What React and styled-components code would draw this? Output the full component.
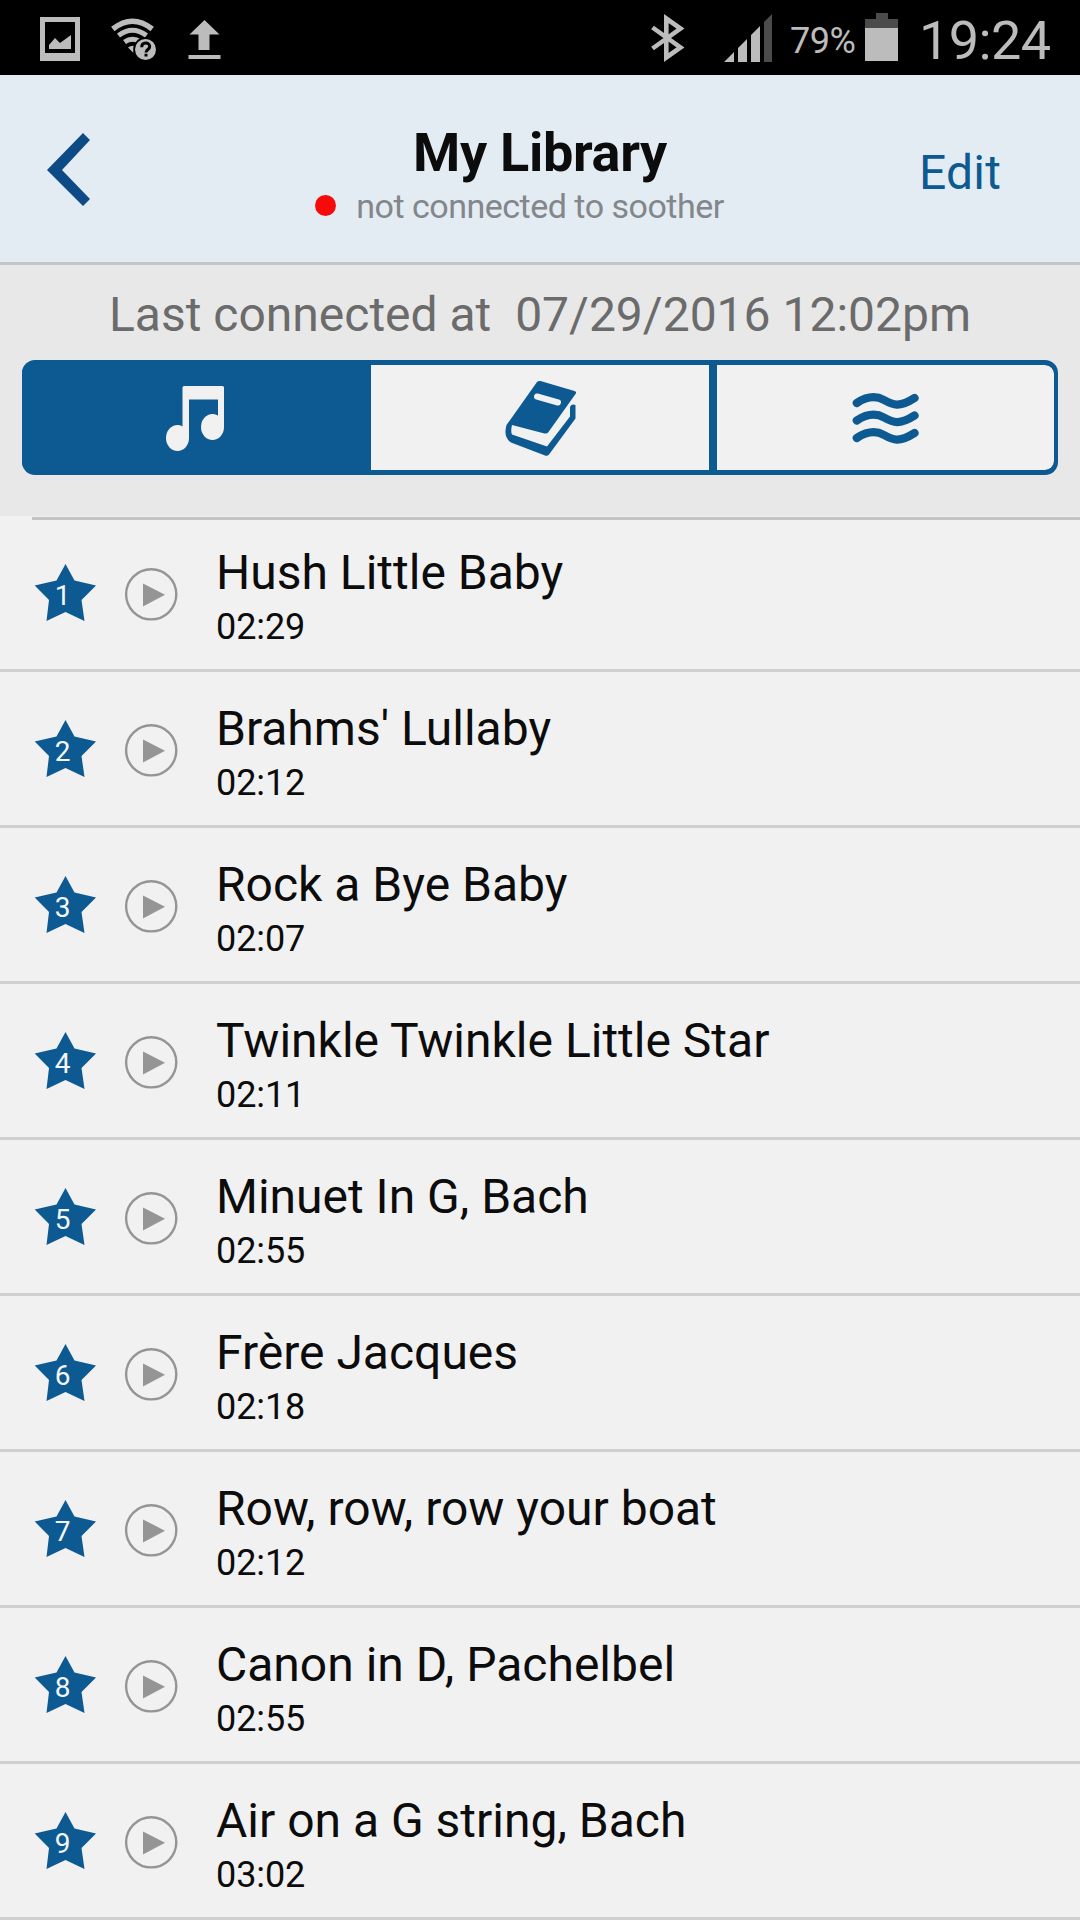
import styled, { createGlobalStyle } from 'styled-components'

const GlobalStyle = createGlobalStyle`
  :root {
    --primary-color: #0d5992;
    --background-color: #f1f1f1;
    --status-color: #bcbcbc;
  }

  * {
    box-sizing: border-box;
  }

  body {
    margin: 0;
    background-color: var(--background-color);
    font-family: Roboto, 'Liberation Sans', sans-serif;
    color: #0c0c0c;
  }

  h1, h2, p, ul {
    margin: 0;
    padding: 0;
    font-weight: 400;
  }

  button {
    padding: 0;
    border: none;
    background: none;
    font-family: inherit;
  }

  svg {
    display: block;
    flex-shrink: 0;
  }
`

const Screen = styled.main`
  width: 1080px;
  height: 1920px;
  overflow: hidden;
`

const StatusBar = styled.div`
  height: 75px;
  padding: 0 31px 0 40px;
  background-color: #000;
  color: var(--status-color);
  display: flex;
  justify-content: space-between;
`

const StatusGroup = styled.div`
  display: flex;
  gap: ${({ $gap }) => $gap || 0}px;
`

const BatteryText = styled.span`
  width: 92px;
  padding-left: 17px;
  font-size: 36px;
  line-height: 82px;
  letter-spacing: -0.5px;
  white-space: nowrap;
`

const Clock = styled.span`
  margin-left: 21px;
  width: 130px;
  font-size: 54px;
  line-height: 81px;
  letter-spacing: -0.6px;
  white-space: nowrap;
`

const Header = styled.header`
  height: 190px;
  background-color: #e4ecf3;
  border-bottom: 3px solid #c2c5c7;
  display: grid;
  grid-template-columns: 200px 1fr 200px;
`

const BackButton = styled.button`
  padding: 58px 0 0 47px;
  display: flex;
  align-items: flex-start;
`

const HeaderTitle = styled.div`
  padding-top: 46px;
  display: flex;
  flex-direction: column;
  align-items: center;
`

const Title = styled.h1`
  font-size: 54px;
  font-weight: 700;
  line-height: 64px;
  letter-spacing: -0.3px;
`

const Connection = styled.p`
  margin-top: 1px;
  display: flex;
  align-items: center;
  gap: 20px;
  font-size: 34px;
  line-height: 40px;
  letter-spacing: -0.5px;
  color: #83868a;
`

const Dot = styled.span`
  width: 21px;
  height: 21px;
  margin: -2px 0 0 -41px;
  border-radius: 50%;
  background-color: #f70a0a;
`

const EditButton = styled.button`
  padding: 70px 0 0 39px;
  font-size: 48px;
  line-height: 56px;
  text-align: left;
  letter-spacing: 0.2px;
  color: var(--primary-color);
  display: flex;
  align-items: flex-start;
`

const Panel = styled.section`
  height: 251px;
  padding: 22px 22px 0;
  background-color: #e8e8e8;
`

const LastConnected = styled.p`
  height: 73px;
  font-size: 48px;
  line-height: 56px;
  text-align: center;
  white-space: pre;
  color: #6b6b6b;
`

const Tabs = styled.div`
  height: 115px;
  border: solid var(--primary-color);
  border-width: 5px 4px 5px 0;
  border-radius: 13px;
  background-color: var(--primary-color);
  overflow: hidden;
  display: grid;
  grid-template-columns: 349px 346px 337px;
`

const Tab = styled.button`
  background-color: ${({ $active }) => ($active ? 'var(--primary-color)' : 'var(--background-color)')};
  color: ${({ $active }) => ($active ? 'var(--background-color)' : 'var(--primary-color)')};
  border-right: ${({ $divided }) => ($divided ? '8px solid var(--primary-color)' : 'none')};
  padding: ${({ $offset }) => $offset};
  display: flex;
  align-items: flex-start;

  &:last-child {
    border-radius: 0 9px 9px 0;
  }
`

const List = styled.ul`
  list-style: none;

  &::before {
    content: '';
    display: block;
    height: 3px;
    margin: 1px 0 -4px 32px;
    background-color: #c4c4c4;
  }
`

const Row = styled.li`
  height: 156px;
  padding-left: 34px;
  border-bottom: 3px solid #d0d0d0;
  display: flex;
`

const Favorite = styled.div`
  width: 62px;
  margin-top: 48px;
  display: grid;
  align-items: start;

  > * {
    grid-area: 1 / 1;
  }
`

const Rank = styled.span`
  padding: 16px 5px 0 0;
  font-size: 28px;
  line-height: 32px;
  text-align: center;
  color: #f4f7fa;
`

const PlayButton = styled.button`
  width: 54px;
  height: 54px;
  margin: 51px 0 0 28px;
`

const TrackInfo = styled.div`
  padding: 29px 0 0 38px;
`

const TrackName = styled.h2`
  font-size: 48px;
  line-height: 56px;
  white-space: nowrap;
`

const Duration = styled.p`
  margin-top: 5px;
  font-size: 36px;
  line-height: 42px;
  letter-spacing: -0.1px;
`

const tracks = [
  { name: 'Hush Little Baby', duration: '02:29' },
  { name: "Brahms' Lullaby", duration: '02:12' },
  { name: 'Rock a Bye Baby', duration: '02:07' },
  { name: 'Twinkle Twinkle Little Star', duration: '02:11' },
  { name: 'Minuet In G, Bach', duration: '02:55' },
  { name: 'Frère Jacques', duration: '02:18' },
  { name: 'Row, row, row your boat', duration: '02:12' },
  { name: 'Canon in D, Pachelbel', duration: '02:55' },
  { name: 'Air on a G string, Bach', duration: '03:02' }
]

// Status bar icons share one 75px tall strip, only x changes
const ImageIcon = () => (
  <svg width='40' height='75' viewBox='40 0 40 75' fill='currentColor'>
    <path fillRule='evenodd' d='M40 17h40v44H40zM45 22v31h30V22z' />
    <path d='M49 49v-4l6-7 5 5 11-8v14z' />
  </svg>
)

const WifiIcon = () => (
  <svg width='46' height='75' viewBox='110 0 46 75' fill='none' stroke='currentColor'>
    <path d='M111.8 29Q131.5 13.500 151.200 29' strokeWidth='5.500' />
    <path d='M117.500 35.5Q131.5 25 145.500 35.500' strokeWidth='5' />
    <path d='M123.500 42Q131.5 36.500 139.5 42' strokeWidth='5' />
    <path d='M127 47.500q4.5-3.500 9 0l-4 5z' fill='currentColor' stroke='none' />
    <circle cx='144.5' cy='49.5' r='12.3' fill='#000' stroke='none' />
    <circle cx='144.5' cy='49.5' r='10.5' fill='currentColor' stroke='none' />
    <path d='M140.7 47.300c0-5.5 8-5.5 8-.8 0 3-3.7 3-3.7 6M145 53.800v2.700' stroke='#000' strokeWidth='3' />
  </svg>
)

const UploadIcon = () => (
  <svg width='33' height='75' viewBox='187.500 0 33 75' fill='currentColor'>
    <path d='M204 20l15 14.5h-10V50h-11V34.5h-9zM188 55h32v4h-32z' />
  </svg>
)

const BluetoothIcon = () => (
  <svg width='34' height='75' viewBox='651 0 34 75' fill='none' stroke='currentColor' strokeWidth='4.6'>
    <path d='M652.5 27.5L680.5 47.5L666.3 57.5V18.5L680.5 28.5L652.5 48.5' />
  </svg>
)

const SignalIcon = () => (
  <svg width='49' height='75' viewBox='724 0 49 75' fill='currentColor'>
    <path d='M724 62l10-10v10zM738 62V48l9-9v23zM751 62V35l9-9v36z' />
    <path d='M764 62V22l8-8v48z' fill='#4b4b4b' />
  </svg>
)

const BatteryIcon = () => (
  <svg width='33' height='75' viewBox='865 0 33 75'>
    <path d='M865 19h11v-6h12v6h10v10h-33z' fill='#4b4b4b' />
    <path d='M865 28h33v33h-33z' fill='currentColor' />
  </svg>
)

const BackIcon = () => (
  <svg width='44' height='75' viewBox='47 133 44 75' fill='#0e4a85'>
    <path d='M47 170L83 133L90 140L62 170L90 199L83 206z' />
  </svg>
)

const MusicIcon = () => (
  <svg width='60' height='68' viewBox='165 385 60 68' fill='currentColor'>
    <path d='M184 386h38.5q1.5 0 1.5 1.5V427h-6v-27.5h-29V438h-6.5V387.5q0-1.5 1.5-1.5z' />
    <ellipse cx='177.5' cy='438' rx='11.5' ry='13' />
    <ellipse cx='212.5' cy='427' rx='11.5' ry='13' />
  </svg>
)

const BookIcon = () => (
  <svg width='71' height='78' viewBox='505 380 71 78'>
    <path
      d='M537 382Q538.5 380.5 540.5 381L574.5 391Q577 392 575.5 394L548.5 432Q547 434 544.5 433.5L512 425Q510.5 431 512 434.5L547 446.5L570 416.5V407Q571.5 403.5 575.5 405V418.5L549 454.5Q547.5 456.5 545 455.5L511 442.5Q503 437 506.5 425Z'
      fill='currentColor'
    />
    <path d='M537 396.5L558 402.5' stroke='var(--background-color)' strokeWidth='6' strokeLinecap='round' />
  </svg>
)

const WavesIcon = () => (
  <svg width='68' height='54' viewBox='853 392 68 54' fill='none' stroke='currentColor' strokeWidth='8.2' strokeLinecap='round'>
    {[0, 17.5, 35].map((y) => (
      <path key={y} transform={`translate(0 ${y})`} d='M857.8 403C867 397 876 395 885 400S900 408 915.5 398' />
    ))}
  </svg>
)

const StarIcon = () => (
  <svg width='62' height='58' viewBox='34 564 62 58' fill='var(--primary-color)'>
    <path d='M65.5 564L74.5 580.5L96 585.5L81.5 600L84.5 621L65.5 612L46.5 621L49 600L34.7 585.5L56.5 580.5z' />
  </svg>
)

const PlayIcon = () => (
  <svg width='54' height='54' viewBox='124 567 54 54' fill='none' stroke='#959595'>
    <circle cx='151.2' cy='594.3' r='25.1' strokeWidth='2.4' />
    <path d='M143 583.5V606.5L165 594.7z' fill='#959595' stroke='none' />
  </svg>
)

function Track({ track, rank }) {
  return (
    <Row>
      <Favorite>
        <StarIcon />
        <Rank>{rank}</Rank>
      </Favorite>
      <PlayButton aria-label='Play'>
        <PlayIcon />
      </PlayButton>
      <TrackInfo>
        <TrackName>{track.name}</TrackName>
        <Duration>{track.duration}</Duration>
      </TrackInfo>
    </Row>
  )
}

function App() {
  return (
    <Screen>
      <GlobalStyle />
      <StatusBar>
        <StatusGroup $gap={31}>
          <ImageIcon />
          <WifiIcon />
          <UploadIcon />
        </StatusGroup>
        <StatusGroup>
          <StatusGroup $gap={39}>
            <BluetoothIcon />
            <SignalIcon />
          </StatusGroup>
          <BatteryText>79%</BatteryText>
          <BatteryIcon />
          <Clock>19:24</Clock>
        </StatusGroup>
      </StatusBar>
      <Header>
        <BackButton aria-label='Back'>
          <BackIcon />
        </BackButton>
        <HeaderTitle>
          <Title>My Library</Title>
          <Connection>
            <Dot />
            not connected to soother
          </Connection>
        </HeaderTitle>
        <EditButton>Edit</EditButton>
      </Header>
      <Panel>
        <LastConnected>{'Last connected at  07/29/2016 12:02pm'}</LastConnected>
        <Tabs>
          <Tab $active $offset='20px 0 0 143px' aria-label='Music'>
            <MusicIcon />
          </Tab>
          <Tab $offset='15px 0 0 134px' $divided aria-label='Stories'>
            <BookIcon />
          </Tab>
          <Tab $offset='27px 0 0 135px' aria-label='Sounds'>
            <WavesIcon />
          </Tab>
        </Tabs>
      </Panel>
      <List>
        {tracks.map((track, index) => (
          <Track key={track.name} track={track} rank={index + 1} />
        ))}
      </List>
    </Screen>
  )
}

export default App
